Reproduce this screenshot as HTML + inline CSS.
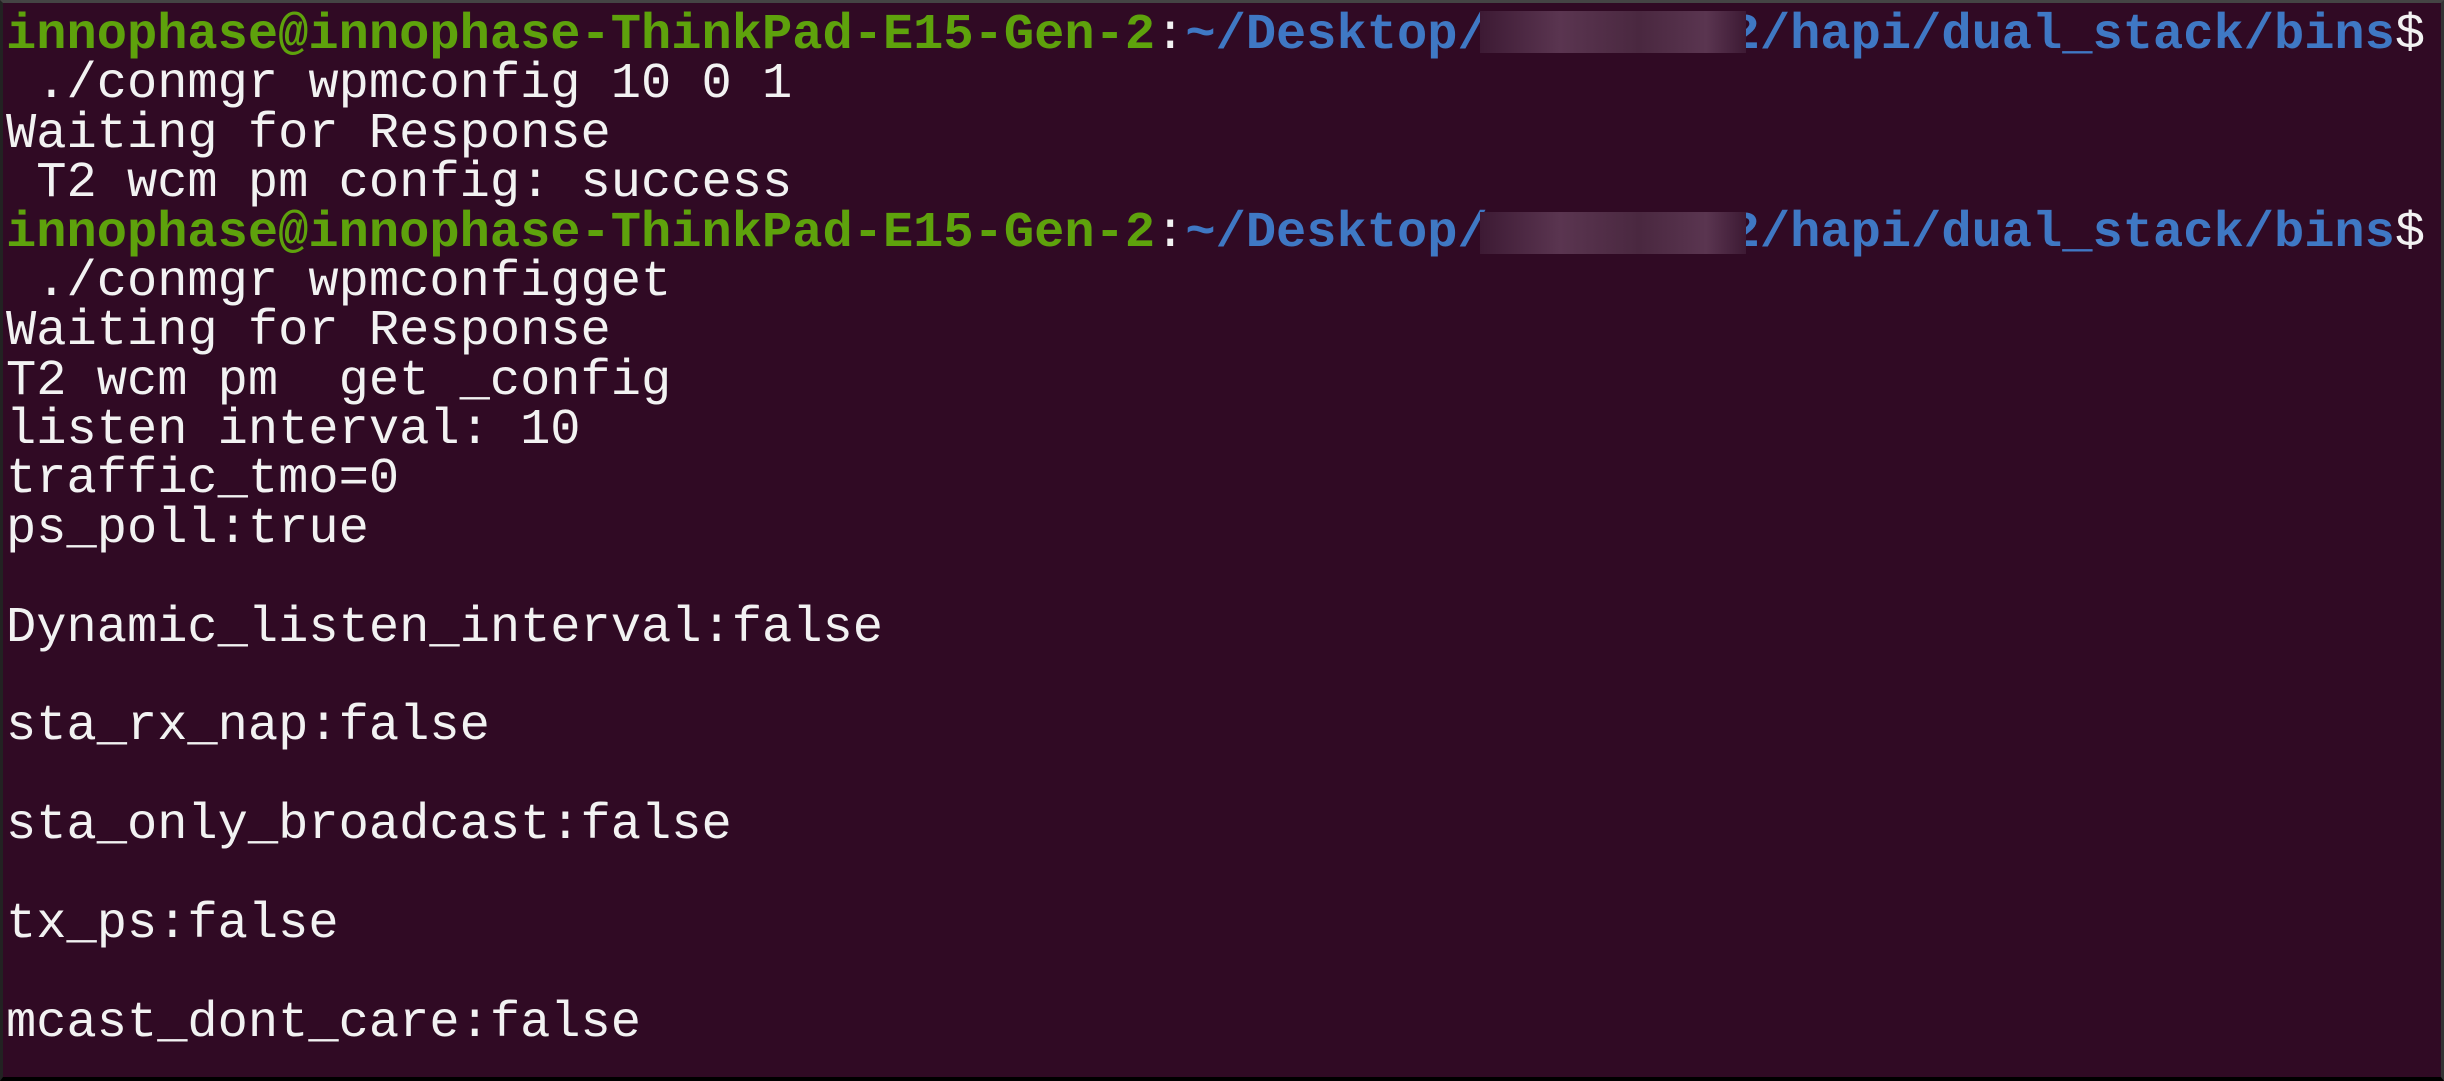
<!DOCTYPE html>
<html><head><meta charset="utf-8"><style>
html,body{margin:0;padding:0;background:#000;}
.t{position:absolute;left:0;top:0;width:2438px;height:1074px;background:#300a24;border-left:3px solid #222;border-top:3px solid #444;border-right:3px solid #333;border-bottom:4px solid #000;overflow:hidden;}
pre{margin:0;position:absolute;left:3px;top:8px;font-family:"Liberation Mono",monospace;font-size:50.4px;line-height:49.37px;color:#f2f2f2;white-space:pre;}
.g{color:#5ea20c;font-weight:bold}
.b{color:#3f78c4;font-weight:bold}
.bl{position:absolute;left:1477px;width:266px;height:42px;background:linear-gradient(90deg,#3d1a34,#5a3550 30%,#4a2840 60%,#5a3550 85%,#3d1a34);}
</style></head><body><div class="t">
<pre><span class="g">innophase@innophase-ThinkPad-E15-Gen-2</span>:<span class="b">~/Desktop/        2/hapi/dual_stack/bins</span>$
 ./conmgr wpmconfig 10 0 1
Waiting for Response
 T2 wcm pm config: success
<span class="g">innophase@innophase-ThinkPad-E15-Gen-2</span>:<span class="b">~/Desktop/        2/hapi/dual_stack/bins</span>$
 ./conmgr wpmconfigget
Waiting for Response
T2 wcm pm  get _config
listen interval: 10
traffic_tmo=0
ps_poll:true

Dynamic_listen_interval:false

sta_rx_nap:false

sta_only_broadcast:false

tx_ps:false

mcast_dont_care:false</pre>
<div class="bl" style="top:8px"></div>
<div class="bl" style="top:209px"></div>
</div></body></html>
